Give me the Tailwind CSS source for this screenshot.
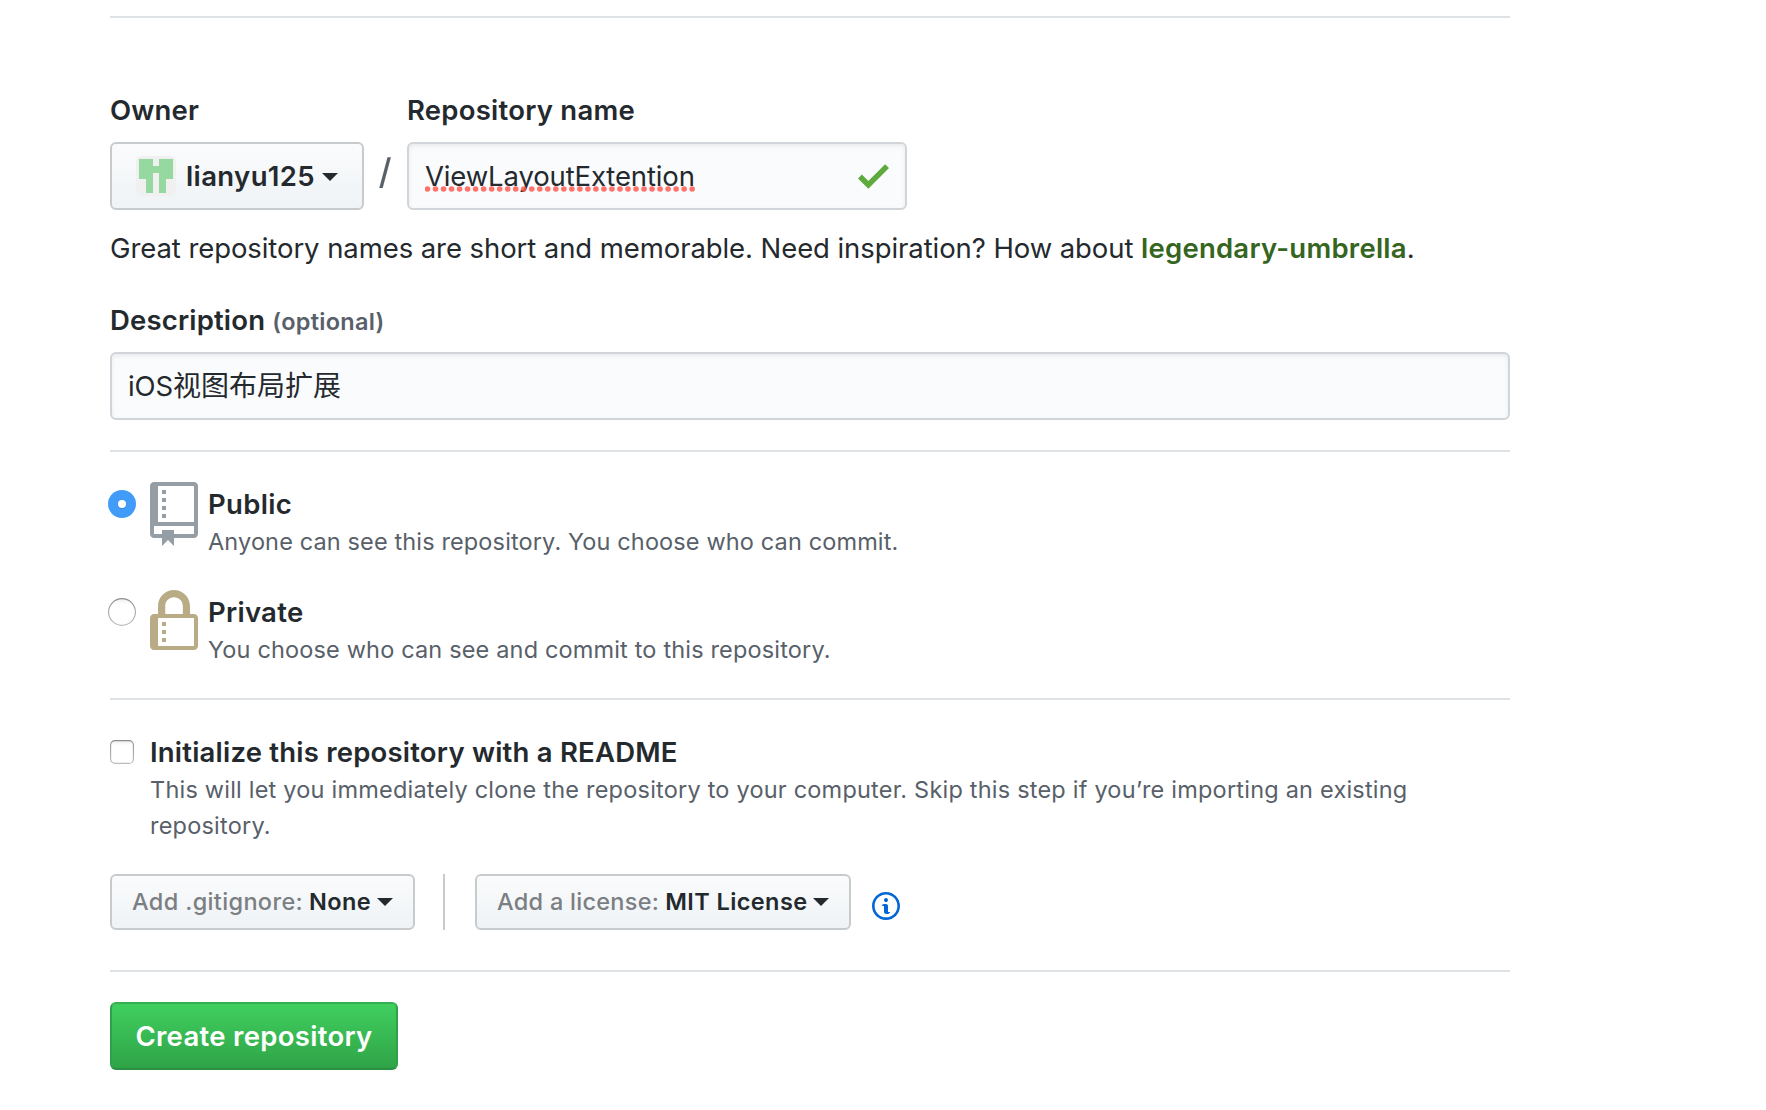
<!DOCTYPE html>
<html lang="en">
<head>
<meta charset="utf-8">
<title>Create a New Repository</title>
<script src="https://cdn.jsdelivr.net/npm/@tailwindcss/browser@4"></script>
</head>
<body class="bg-white text-[#24292e] font-[Inter,'Noto_Sans_CJK_SC',sans-serif] text-[27.5px] leading-[42px] tracking-[-0.08px] overflow-hidden">
<form class="ml-[110px] w-[1400px] pt-4">
  <hr class="border-0 h-0.5 bg-[#dfe2e5]">

  <!-- Owner and name -->
  <div class="flex mt-[71px]">
    <div class="w-[254px]">
      <div class="font-semibold tracking-[0.15px]">Owner</div>
      <div class="mt-[11px] h-[68px] border-2 border-[#c8cbce] rounded-md bg-linear-to-b from-[#fafbfc] to-[#eff3f6] flex items-center pl-6">
        <svg class="w-10 h-10 shrink-0" viewBox="0 0 40 40"><rect width="40" height="40" rx="6" fill="#f0f0f0"/><path fill="#96d9a0" d="M3 3h14v7h6V3h14v20h-7v14h-7V17h-6v20h-7V23H3z"/></svg>
        <span class="ml-2.5 font-semibold tracking-[0.38px]">lianyu125</span>
        <svg class="ml-[7px] mt-0.5 w-4 h-2" viewBox="0 0 16 8"><path fill="#24292e" d="M0 0h16L8 8z"/></svg>
      </div>
    </div>
    <svg class="w-[43px] h-[32px] mt-[68px]" viewBox="0 0 43 32"><path d="M23.5 0.3h3.4L18.7 31h-3.4z" fill="#586069"/></svg>
    <div class="w-[500px]">
      <div class="font-semibold tracking-[0.24px]">Repository name</div>
      <div class="mt-[11px] h-[68px] border-2 border-[#d1d5da] rounded-md bg-[#fafbfc] shadow-[inset_0_2px_4px_rgba(27,31,35,0.075)] flex items-center justify-between pl-4 pr-4">
        <span class="relative tracking-[-0.14px]">ViewLayoutExtention
          <svg class="absolute left-0 top-[31px] w-[270px] h-1.5" viewBox="0 0 270 6"><path d="M2.5 3H269" stroke="#ff5b50" stroke-opacity=".85" stroke-width="5.6" stroke-linecap="round" stroke-dasharray="0 8.02"/></svg>
        </span>
        <svg class="w-[31px] h-[25px]" viewBox="0 3.5 12 9.5"><path fill="#5eaa3c" d="M12 5l-8 8-4-4 1.5-1.5L4 10l6.5-6.5z"/></svg>
      </div>
    </div>
  </div>
  <p class="mt-[17px] whitespace-nowrap">Great repository names are short and memorable. Need inspiration? How about <strong class="font-semibold text-[#35651e] tracking-[0.24px]">legendary-umbrella</strong>.</p>

  <!-- Description -->
  <div class="mt-[30px] font-semibold tracking-[0.17px]">Description <span class="text-[23.5px] text-[#586069] tracking-[0.3px]">(optional)</span></div>
  <div class="mt-[9px] h-[68px] border-2 border-[#d1d5da] rounded-md bg-[#fafbfc] shadow-[inset_0_2px_4px_rgba(27,31,35,0.075)] flex items-center pl-4"><span>iOS<span class="text-[28px] tracking-normal">视图布局扩展</span></span></div>
  <hr class="mt-[30px] border-0 h-0.5 bg-[#dfe2e5]">

  <!-- Visibility -->
  <div class="flex mt-[30px] h-[108px]">
    <svg class="-ml-0.5 mt-2 w-7 h-7 shrink-0" viewBox="0 0 28 28"><circle cx="14" cy="14" r="14" fill="#419bf9"/><circle cx="14" cy="14.7" r="4.2" fill="#1d6fce" opacity=".5"/><circle cx="14" cy="14" r="4" fill="#fff"/></svg>
    <svg class="ml-3.5 w-12 h-16 shrink-0" viewBox="0 0 12 16"><path fill="#959da5" d="M4 9H3V8h1v1zm0-3H3v1h1V6zm0-2H3v1h1V4zm0-2H3v1h1V2zm8-1v12c0 .55-.45 1-1 1H6v2l-1.5-1.5L3 16v-2H1c-.55 0-1-.45-1-1V1c0-.55.45-1 1-1h10c.55 0 1 .45 1 1zm-1 10H1v2h2v-1h3v1h5v-2zm0-10H2v9h9V1z"/></svg>
    <div class="ml-2.5 pt-0.5">
      <div class="font-semibold leading-10 tracking-[0.3px]">Public</div>
      <div class="text-[23.5px] leading-9 tracking-[0.13px] text-[#586069]">Anyone can see this repository. You choose who can commit.</div>
    </div>
  </div>
  <div class="flex h-[108px]">
    <svg class="-ml-0.5 mt-2 w-7 h-7 shrink-0" viewBox="0 0 28 28"><defs><linearGradient id="r" x2="0" y2="1"><stop stop-color="#8e8e8e"/><stop offset="1" stop-color="#bcbcbc"/></linearGradient><linearGradient id="f" x2="0" y2="1"><stop stop-color="#ececec"/><stop offset=".2" stop-color="#fff"/></linearGradient></defs><circle cx="14" cy="14" r="13.4" fill="url(#f)" stroke="url(#r)" stroke-width="1.1"/></svg>
    <svg class="ml-3.5 w-12 h-16 shrink-0" viewBox="0 0 12 16"><path fill="#b8ab85" d="M4 13H3v-1h1v1zm8-6v7c0 .55-.45 1-1 1H1c-.55 0-1-.45-1-1V7c0-.55.45-1 1-1h1V4c0-2.2 1.8-4 4-4s4 1.8 4 4v2h1c.55 0 1 .45 1 1zM3.8 6h4.41V4c0-1.22-.98-2.2-2.2-2.2-1.22 0-2.2.98-2.2 2.2v2H3.8zM11 7H2v7h9V7zM4 8H3v1h1V8zm0 2H3v1h1v-1z"/></svg>
    <div class="ml-2.5 pt-0.5">
      <div class="font-semibold leading-10 tracking-[0.27px]">Private</div>
      <div class="text-[23.5px] leading-9 tracking-[0.16px] text-[#586069]">You choose who can see and commit to this repository.</div>
    </div>
  </div>
  <hr class="border-0 h-0.5 bg-[#dfe2e5]">

  <!-- README -->
  <div class="flex mt-8">
    <svg class="mt-2 w-6 h-6 shrink-0" viewBox="0 0 24 24"><rect x=".6" y=".6" width="22.8" height="22.8" rx="4.5" fill="url(#f)" stroke="url(#r)" stroke-width="1.1"/></svg>
    <div class="ml-4">
      <div class="font-semibold leading-10 tracking-[0.21px]">Initialize this repository with a README</div>
      <div class="text-[23.5px] leading-9 tracking-[0.21px] text-[#586069] whitespace-nowrap">This will let you immediately clone the repository to your computer. Skip this step if you’re importing an existing<br>repository.</div>
    </div>
  </div>

  <!-- Templates -->
  <div class="flex mt-[30px] h-14 text-[23.5px] leading-[34px]">
    <div class="w-[305px] border-2 border-[#c8cbce] rounded-md bg-linear-to-b from-[#fafbfc] to-[#eff3f6] flex pt-[9px] pl-5">
      <span class="font-medium text-[#7b7f83] tracking-[0.35px]">Add .gitignore:</span>
      <span class="ml-[6px] font-semibold tracking-[0.4px]">None</span>
      <svg class="ml-[6px] mt-[13px] w-4 h-2" viewBox="0 0 16 8"><path fill="#24292e" d="M0 0h16L8 8z"/></svg>
    </div>
    <div class="ml-7 w-0.5 bg-[#c8cbce]"></div>
    <div class="ml-[30px] w-[376px] border-2 border-[#c8cbce] rounded-md bg-linear-to-b from-[#fafbfc] to-[#eff3f6] flex pt-[9px] pl-5">
      <span class="font-medium text-[#7b7f83] tracking-[0.27px]">Add a license:</span>
      <span class="ml-[6px] font-semibold tracking-[0.42px]">MIT License</span>
      <svg class="ml-[5px] mt-[13px] w-4 h-2" viewBox="0 0 16 8"><path fill="#24292e" d="M0 0h16L8 8z"/></svg>
    </div>
    <svg class="ml-[21px] mt-4 w-7 h-8" viewBox="0 0 14 16"><path fill="#0366d6" fill-rule="evenodd" d="M6.3 5.69a.942.942 0 0 1-.28-.7c0-.28.09-.52.28-.7.19-.18.42-.28.7-.28.28 0 .52.09.7.28.18.19.28.42.28.7 0 .28-.09.52-.28.7a1 1 0 0 1-.7.3c-.28 0-.52-.11-.7-.3zM8 7.99c-.02-.25-.11-.48-.31-.69-.2-.19-.42-.3-.69-.31H6c-.27.02-.48.13-.69.31-.2.2-.3.44-.31.69h1v3c.02.27.11.5.31.69.2.2.42.31.69.31h1c.27 0 .48-.11.69-.31.2-.19.3-.42.31-.69H8V7.98v.01zM7 2.3c-3.14 0-5.7 2.54-5.7 5.68 0 3.14 2.56 5.7 5.7 5.7s5.7-2.55 5.7-5.7c0-3.15-2.56-5.69-5.7-5.69v.01zM7 .98c3.86 0 7 3.14 7 7s-3.14 7-7 7-7-3.12-7-7 3.14-7 7-7z"/></svg>
  </div>
  <hr class="mt-10 border-0 h-0.5 bg-[#dfe2e5]">

  <button type="button" class="block mt-[30px] w-[288px] h-[68px] border-2 border-[#30a14b] border-t-[#35b153] border-b-[#2a8e43] rounded-md bg-linear-to-b from-[#40cf5f] to-[#2fa447] text-white font-semibold tracking-[0.3px] whitespace-nowrap">Create repository</button>
</form>
</body>
</html>
